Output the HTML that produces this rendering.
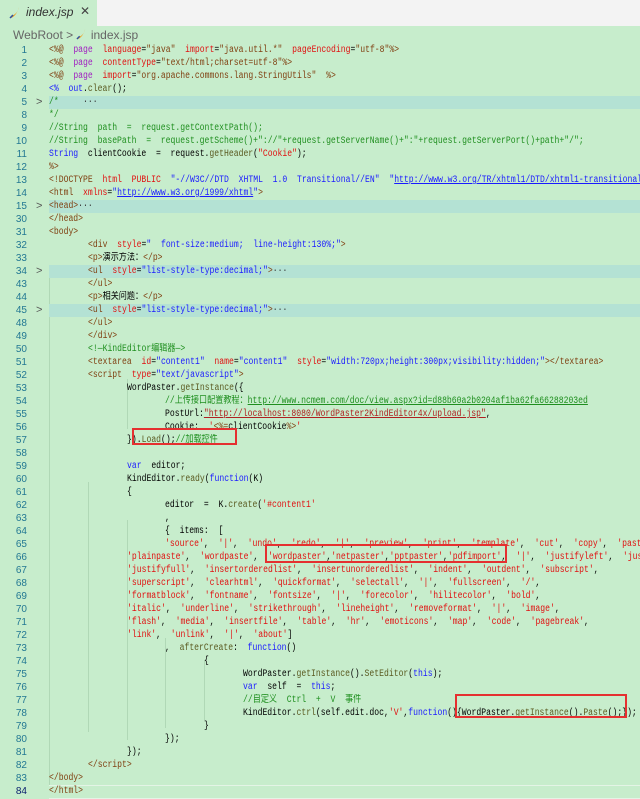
<!DOCTYPE html>
<html><head><meta charset="utf-8"><style>
*{margin:0;padding:0;box-sizing:border-box}
body{width:640px;height:795px;overflow:hidden;background:#c7edcc;position:relative;font-family:"Liberation Mono","Noto Sans CJK SC",monospace;}
.topbar{position:absolute;left:0;top:0;width:640px;height:26px;background:#f3f3f3}
.tab{position:absolute;left:0;top:0;width:97px;height:26px;background:#c7edcc;font:italic 12px "Liberation Sans",sans-serif;color:#333}
.crumb{position:absolute;left:13px;top:28px;font:12px "Liberation Sans",sans-serif;color:#666}
.ln{position:absolute;left:0;width:640px;height:13px;font-size:10px;line-height:13px;white-space:pre;color:#000;overflow:hidden}
.ln .n{position:absolute;left:0;width:27px;text-align:right;color:#237893;font-family:"Liberation Sans",sans-serif;font-size:10px}
.ln .c{position:absolute;top:0;transform:scaleX(.81);transform-origin:0 0}
.hl{background:#b4e2d4}
.arr{position:absolute;left:36px;color:#555;font-family:"Liberation Sans",sans-serif;font-size:11px}
.t{color:#7f3f10}.a{color:#e01010}.s{color:#1a1aff}.k{color:#a020c0}.g{color:#1f8f1f}.b{color:#1a1aff}.u{color:#1a1aff;text-decoration:underline}.r{color:#b02020;text-decoration:underline}.d{color:#333}.q{color:#5a5a20}
.box{position:absolute;border:2px solid #e53030}
.guide{position:absolute;width:1px;background:#b0d8b6}
</style></head><body>
<div class="topbar"><div class="tab"><svg style="position:absolute;left:9px;top:6px" width="12" height="13" viewBox="0 0 12 13"><path d="M2 12 C5 11 8 8 10 1 C9 6 6 9 2 10 Z" fill="#f0a020"/><path d="M1 12 L4 9" stroke="#3050a0" stroke-width="1.5"/></svg><span style="position:absolute;left:26px;top:5px">index.jsp</span><span style="position:absolute;left:80px;top:4px;font-style:normal;color:#444">✕</span></div></div>
<div class="crumb">WebRoot &gt; <svg width="11" height="12" viewBox="0 0 12 13" style="vertical-align:-1px"><path d="M2 12 C5 11 8 8 10 1 C9 6 6 9 2 10 Z" fill="#f0a020"/><path d="M1 12 L4 9" stroke="#3050a0" stroke-width="1.5"/></svg> index.jsp</div>

<div class="guide" style="left:49px;top:276px;height:510px"></div>
<div class="guide" style="left:88px;top:482px;height:250px"></div>
<div class="guide" style="left:127px;top:379px;height:50px"></div>
<div class="guide" style="left:127px;top:520px;height:220px"></div>
<div class="guide" style="left:165px;top:638px;height:90px"></div>
<div class="guide" style="left:204px;top:660px;height:60px"></div>

<div class="ln" style="top:44px"><span class="n">1</span><span class="c" style="left:49px"><span class="t">&lt;%@</span>  <span class="k">page</span>  <span class="a">language</span>=<span class="t">"java"</span>  <span class="a">import</span>=<span class="t">"java.util.*"</span>  <span class="a">pageEncoding</span>=<span class="t">"utf-8"%&gt;</span></span></div>
<div class="ln" style="top:57px"><span class="n">2</span><span class="c" style="left:49px"><span class="t">&lt;%@</span>  <span class="k">page</span>  <span class="a">contentType</span>=<span class="t">"text/html;charset=utf-8"%&gt;</span></span></div>
<div class="ln" style="top:70px"><span class="n">3</span><span class="c" style="left:49px"><span class="t">&lt;%@</span>  <span class="k">page</span>  <span class="a">import</span>=<span class="t">"org.apache.commons.lang.StringUtils"  %&gt;</span></span></div>
<div class="ln" style="top:83px"><span class="n">4</span><span class="c" style="left:49px"><span class="b">&lt;%</span>  <span class="b">out</span>.<span class="q">clear</span>();</span></div>
<div class="ln hl" style="top:96px;left:49px;width:591px"></div>
<div class="ln" style="top:96px"><span class="n">5</span><span class="arr">&gt;</span><span class="c" style="left:49px"><span class="g">/*     </span><span class="d">···</span></span></div>
<div class="ln" style="top:109px"><span class="n">8</span><span class="c" style="left:49px"><span class="g">*/</span></span></div>
<div class="ln" style="top:122px"><span class="n">9</span><span class="c" style="left:49px"><span class="g">//String  path  =  request.getContextPath();</span></span></div>
<div class="ln" style="top:135px"><span class="n">10</span><span class="c" style="left:49px"><span class="g">//String  basePath  =  request.getScheme()+"://"+request.getServerName()+":"+request.getServerPort()+path+"/";</span></span></div>
<div class="ln" style="top:148px"><span class="n">11</span><span class="c" style="left:49px"><span class="b">String</span>  clientCookie  =  request.<span class="q">getHeader</span>(<span class="a">"Cookie"</span>);</span></div>
<div class="ln" style="top:161px"><span class="n">12</span><span class="c" style="left:49px"><span class="t">%&gt;</span></span></div>
<div class="ln" style="top:174px"><span class="n">13</span><span class="c" style="left:49px"><span class="t">&lt;!DOCTYPE</span>  <span class="a">html</span>  <span class="a">PUBLIC</span>  <span class="s">"-//W3C//DTD  XHTML  1.0  Transitional//EN"</span>  <span class="s">"</span><span class="u">http://www.w3.org/TR/xhtml1/DTD/xhtml1-transitional.dtd</span></span></div>
<div class="ln" style="top:187px"><span class="n">14</span><span class="c" style="left:49px"><span class="t">&lt;html</span>  <span class="a">xmlns</span>=<span class="s">"</span><span class="u">http://www.w3.org/1999/xhtml</span><span class="s">"</span><span class="t">&gt;</span></span></div>
<div class="ln hl" style="top:200px;left:49px;width:591px"></div>
<div class="ln" style="top:200px"><span class="n">15</span><span class="arr">&gt;</span><span class="c" style="left:49px"><span class="t">&lt;head&gt;</span><span class="d">···</span></span></div>
<div class="ln" style="top:213px"><span class="n">30</span><span class="c" style="left:49px"><span class="t">&lt;/head&gt;</span></span></div>
<div class="ln" style="top:226px"><span class="n">31</span><span class="c" style="left:49px"><span class="t">&lt;body&gt;</span></span></div>
<div class="ln" style="top:239px"><span class="n">32</span><span class="c" style="left:88px"><span class="t">&lt;div</span>  <span class="a">style</span>=<span class="s">"  font-size:medium;  line-height:130%;"</span><span class="t">&gt;</span></span></div>
<div class="ln" style="top:252px"><span class="n">33</span><span class="c" style="left:88px"><span class="t">&lt;p&gt;</span>演示方法：<span class="t">&lt;/p&gt;</span></span></div>
<div class="ln hl" style="top:265px;left:49px;width:591px"></div>
<div class="ln" style="top:265px"><span class="n">34</span><span class="arr">&gt;</span><span class="c" style="left:88px"><span class="t">&lt;ul</span>  <span class="a">style</span>=<span class="s">"list-style-type:decimal;"</span><span class="t">&gt;</span><span class="d">···</span></span></div>
<div class="ln" style="top:278px"><span class="n">43</span><span class="c" style="left:88px"><span class="t">&lt;/ul&gt;</span></span></div>
<div class="ln" style="top:291px"><span class="n">44</span><span class="c" style="left:88px"><span class="t">&lt;p&gt;</span>相关问题：<span class="t">&lt;/p&gt;</span></span></div>
<div class="ln hl" style="top:304px;left:49px;width:591px"></div>
<div class="ln" style="top:304px"><span class="n">45</span><span class="arr">&gt;</span><span class="c" style="left:88px"><span class="t">&lt;ul</span>  <span class="a">style</span>=<span class="s">"list-style-type:decimal;"</span><span class="t">&gt;</span><span class="d">···</span></span></div>
<div class="ln" style="top:317px"><span class="n">48</span><span class="c" style="left:88px"><span class="t">&lt;/ul&gt;</span></span></div>
<div class="ln" style="top:330px"><span class="n">49</span><span class="c" style="left:88px"><span class="t">&lt;/div&gt;</span></span></div>
<div class="ln" style="top:343px"><span class="n">50</span><span class="c" style="left:88px"><span class="g">&lt;!—KindEditor编辑器—&gt;</span></span></div>
<div class="ln" style="top:356px"><span class="n">51</span><span class="c" style="left:88px"><span class="t">&lt;textarea</span>  <span class="a">id</span>=<span class="s">"content1"</span>  <span class="a">name</span>=<span class="s">"content1"</span>  <span class="a">style</span>=<span class="s">"width:720px;height:300px;visibility:hidden;"</span><span class="t">&gt;&lt;/textarea&gt;</span></span></div>
<div class="ln" style="top:369px"><span class="n">52</span><span class="c" style="left:88px"><span class="t">&lt;script</span>  <span class="a">type</span>=<span class="s">"text/javascript"</span><span class="t">&gt;</span></span></div>
<div class="ln" style="top:382px"><span class="n">53</span><span class="c" style="left:127px">WordPaster.<span class="q">getInstance</span>({</span></div>
<div class="ln" style="top:395px"><span class="n">54</span><span class="c" style="left:165px"><span class="g">//上传接口配置教程：<span style="text-decoration:underline">http://www.ncmem.com/doc/view.aspx?id=d88b60a2b0204af1ba62fa66288203ed</span></span></span></div>
<div class="ln" style="top:408px"><span class="n">55</span><span class="c" style="left:165px">PostUrl:<span class="r">"http://localhost:8080/WordPaster2KindEditor4x/upload.jsp"</span>,</span></div>
<div class="ln" style="top:421px"><span class="n">56</span><span class="c" style="left:165px">Cookie:  <span class="a">'</span><span class="t">&lt;%=</span>clientCookie<span class="t">%&gt;</span><span class="a">'</span></span></div>
<div class="ln" style="top:434px"><span class="n">57</span><span class="c" style="left:127px">}).<span class="q">Load</span>();<span class="g">//加载控件</span></span></div>
<div class="ln" style="top:447px"><span class="n">58</span></div>
<div class="ln" style="top:460px"><span class="n">59</span><span class="c" style="left:127px"><span class="b">var</span>  editor;</span></div>
<div class="ln" style="top:473px"><span class="n">60</span><span class="c" style="left:127px">KindEditor.<span class="q">ready</span>(<span class="b">function</span>(K)</span></div>
<div class="ln" style="top:486px"><span class="n">61</span><span class="c" style="left:127px">{</span></div>
<div class="ln" style="top:499px"><span class="n">62</span><span class="c" style="left:165px">editor  =  K.<span class="q">create</span>(<span class="a">'#content1'</span></span></div>
<div class="ln" style="top:512px"><span class="n">63</span><span class="c" style="left:165px">,</span></div>
<div class="ln" style="top:525px"><span class="n">64</span><span class="c" style="left:165px">{  items:  [</span></div>
<div class="ln" style="top:538px"><span class="n">65</span><span class="c" style="left:165px"><span class="a">'source'</span>,  <span class="a">'|'</span>,  <span class="a">'undo'</span>,  <span class="a">'redo'</span>,  <span class="a">'|'</span>,  <span class="a">'preview'</span>,  <span class="a">'print'</span>,  <span class="a">'template'</span>,  <span class="a">'cut'</span>,  <span class="a">'copy'</span>,  <span class="a">'paste'</span></span></div>
<div class="ln" style="top:551px"><span class="n">66</span><span class="c" style="left:127px"><span class="a">'plainpaste'</span>,  <span class="a">'wordpaste'</span>,  <span class="a">'wordpaster'</span>,<span class="a">'netpaster'</span>,<span class="a">'pptpaster'</span>,<span class="a">'pdfimport'</span>,  <span class="a">'|'</span>,  <span class="a">'justifyleft'</span>,  <span class="a">'justify</span></span></div>
<div class="ln" style="top:564px"><span class="n">67</span><span class="c" style="left:127px"><span class="a">'justifyfull'</span>,  <span class="a">'insertorderedlist'</span>,  <span class="a">'insertunorderedlist'</span>,  <span class="a">'indent'</span>,  <span class="a">'outdent'</span>,  <span class="a">'subscript'</span>,</span></div>
<div class="ln" style="top:577px"><span class="n">68</span><span class="c" style="left:127px"><span class="a">'superscript'</span>,  <span class="a">'clearhtml'</span>,  <span class="a">'quickformat'</span>,  <span class="a">'selectall'</span>,  <span class="a">'|'</span>,  <span class="a">'fullscreen'</span>,  <span class="a">'/'</span>,</span></div>
<div class="ln" style="top:590px"><span class="n">69</span><span class="c" style="left:127px"><span class="a">'formatblock'</span>,  <span class="a">'fontname'</span>,  <span class="a">'fontsize'</span>,  <span class="a">'|'</span>,  <span class="a">'forecolor'</span>,  <span class="a">'hilitecolor'</span>,  <span class="a">'bold'</span>,</span></div>
<div class="ln" style="top:603px"><span class="n">70</span><span class="c" style="left:127px"><span class="a">'italic'</span>,  <span class="a">'underline'</span>,  <span class="a">'strikethrough'</span>,  <span class="a">'lineheight'</span>,  <span class="a">'removeformat'</span>,  <span class="a">'|'</span>,  <span class="a">'image'</span>,</span></div>
<div class="ln" style="top:616px"><span class="n">71</span><span class="c" style="left:127px"><span class="a">'flash'</span>,  <span class="a">'media'</span>,  <span class="a">'insertfile'</span>,  <span class="a">'table'</span>,  <span class="a">'hr'</span>,  <span class="a">'emoticons'</span>,  <span class="a">'map'</span>,  <span class="a">'code'</span>,  <span class="a">'pagebreak'</span>,</span></div>
<div class="ln" style="top:629px"><span class="n">72</span><span class="c" style="left:127px"><span class="a">'link'</span>,  <span class="a">'unlink'</span>,  <span class="a">'|'</span>,  <span class="a">'about'</span>]</span></div>
<div class="ln" style="top:642px"><span class="n">73</span><span class="c" style="left:165px">,  <span class="q">afterCreate</span>:  <span class="b">function</span>()</span></div>
<div class="ln" style="top:655px"><span class="n">74</span><span class="c" style="left:204px">{</span></div>
<div class="ln" style="top:668px"><span class="n">75</span><span class="c" style="left:243px">WordPaster.<span class="q">getInstance</span>().<span class="q">SetEditor</span>(<span class="b">this</span>);</span></div>
<div class="ln" style="top:681px"><span class="n">76</span><span class="c" style="left:243px"><span class="b">var</span>  self  =  <span class="b">this</span>;</span></div>
<div class="ln" style="top:694px"><span class="n">77</span><span class="c" style="left:243px"><span class="g">//自定义  Ctrl  +  V  事件</span></span></div>
<div class="ln" style="top:707px"><span class="n">78</span><span class="c" style="left:243px">KindEditor.<span class="q">ctrl</span>(self.edit.doc,<span class="a">'V'</span>,<span class="b">function</span>(){WordPaster.<span class="q">getInstance</span>().<span class="q">Paste</span>();});</span></div>
<div class="ln" style="top:720px"><span class="n">79</span><span class="c" style="left:204px">}</span></div>
<div class="ln" style="top:733px"><span class="n">80</span><span class="c" style="left:165px">});</span></div>
<div class="ln" style="top:746px"><span class="n">81</span><span class="c" style="left:127px">});</span></div>
<div class="ln" style="top:759px"><span class="n">82</span><span class="c" style="left:88px"><span class="t">&lt;/script&gt;</span></span></div>
<div class="ln" style="top:772px"><span class="n">83</span><span class="c" style="left:49px"><span class="t">&lt;/body&gt;</span></span></div>
<div class="ln" style="top:785px;left:49px;width:591px;border-top:1px solid #e4f4e6;border-bottom:1px solid #e4f4e6;height:14px"></div>
<div class="ln" style="top:785px"><span class="n" style="color:#0b216f">84</span><span class="c" style="left:49px"><span class="t">&lt;/html&gt;</span></span></div>

<div class="box" style="left:132px;top:428px;width:105px;height:17px"></div>
<div class="box" style="left:265px;top:544px;width:242px;height:19px"></div>
<div class="box" style="left:455px;top:694px;width:172px;height:24px"></div>
</body></html>
